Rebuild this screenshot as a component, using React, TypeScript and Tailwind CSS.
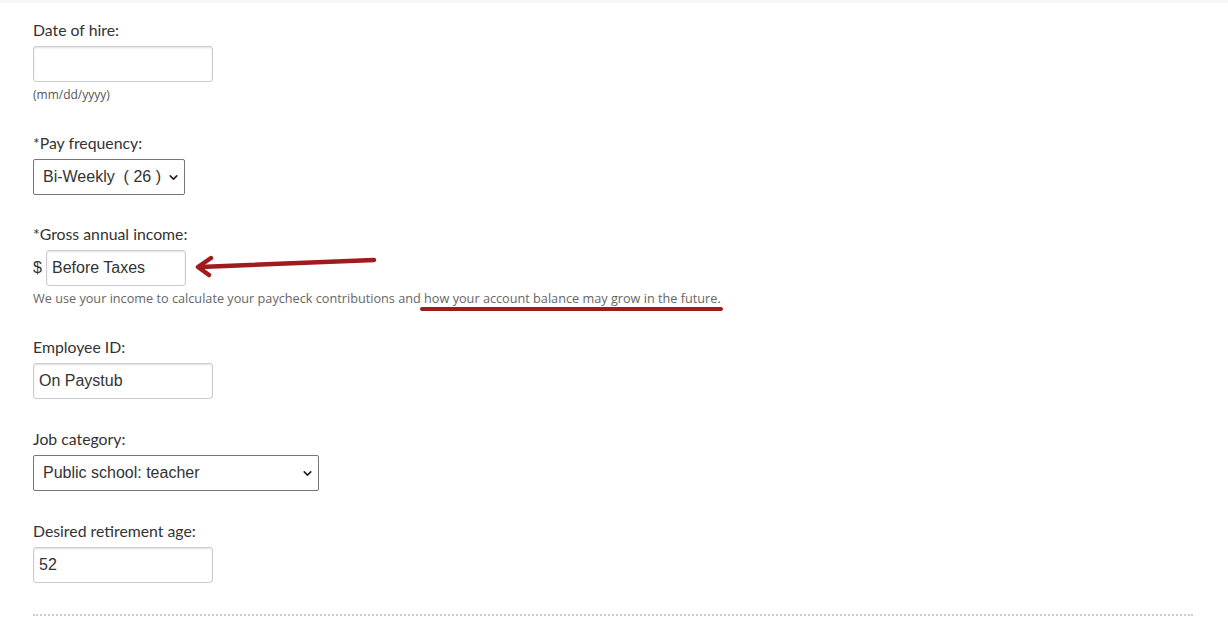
import React from 'react';
import { ChevronDown } from 'lucide-react';

const labelCls = "block text-[15.8px] leading-5 text-[#333] mb-1.5 font-['Lato',sans-serif]";
const inputCls =
  "h-9 border border-[#ccc] rounded-[3px] shadow-[inset_0_1px_2px_rgba(0,0,0,0.12)] px-[5px] text-[16px] text-[#333] font-['Liberation_Sans',Arial,sans-serif] outline-none bg-white";

const FakeSelect: React.FC<{ value: string; width: string }> = ({ value, width }) => (
  <div
    className={`${width} h-9 flex items-center justify-between border border-[#767676] rounded-[2px] bg-white pl-[9px] pr-[4px] text-[16px] text-[#333] font-['Liberation_Sans',Arial,sans-serif]`}
  >
    <span className="whitespace-pre">{value}</span>
    <ChevronDown size={13} strokeWidth={3} className="text-[#222]" />
  </div>
);

const App: React.FC = () => {
  return (
    <div className="min-h-[640px] bg-white border-t-[3px] border-[#f6f6f6]">
      <div className="pl-[33px] pr-[35px] pt-[17px]">
        {/* Date of hire */}
        <div>
          <label className={labelCls}>Date of hire:</label>
          <input className={`${inputCls} w-[180px]`} defaultValue="" />
          <p className="mt-1.5 text-[12px] leading-[14px] text-[#555] font-['Open_Sans',sans-serif]">(mm/dd/yyyy)</p>
        </div>

        {/* Pay frequency */}
        <div className="mt-[31px]">
          <label className={labelCls}>*Pay frequency:</label>
          <FakeSelect value="Bi-Weekly  ( 26 )" width="w-[152px]" />
        </div>

        {/* Gross annual income */}
        <div className="mt-[29px]">
          <label className={labelCls}>*Gross annual income:</label>
          <div className="flex items-center">
            <span className="text-[16px] text-[#333] font-['Liberation_Sans',Arial,sans-serif] w-[13px]">$</span>
            <input className={`${inputCls} w-[140px]`} defaultValue="Before Taxes" />
            <svg width="186" height="24" viewBox="0 0 186 24" className="ml-[8px] -mt-[4px]">
              <path d="M6 13 L180 6" stroke="#a01a1e" strokeWidth="4.5" strokeLinecap="round" fill="none" />
              <path d="M17 4 L4 13 L15 21" stroke="#a01a1e" strokeWidth="4.5" strokeLinecap="round" strokeLinejoin="round" fill="none" />
            </svg>
          </div>
          <p className="mt-[4px] text-[12.7px] leading-4 text-[#666] font-['Open_Sans',sans-serif]">
            We use your income to calculate your paycheck contributions and{' '}
            <span className="relative">
              how your account balance may grow in the future.
              <span className="absolute left-[-4px] right-[-2px] top-[18px] h-[4px] rounded-full bg-[#a01a1e]" />
            </span>
          </p>
        </div>

        {/* Employee ID */}
        <div className="mt-[31px]">
          <label className={labelCls}>Employee ID:</label>
          <input className={`${inputCls} w-[180px]`} defaultValue="On Paystub" />
        </div>

        {/* Job category */}
        <div className="mt-[30px]">
          <label className={labelCls}>Job category:</label>
          <FakeSelect value="Public school: teacher" width="w-[286px]" />
        </div>

        {/* Desired retirement age */}
        <div className="mt-[30px]">
          <label className={labelCls}>Desired retirement age:</label>
          <input className={`${inputCls} w-[180px]`} defaultValue="52" />
        </div>

        <div className="mt-[31px] border-t-2 border-dotted border-[#ccc]" />
      </div>
    </div>
  );
};

export default App;
